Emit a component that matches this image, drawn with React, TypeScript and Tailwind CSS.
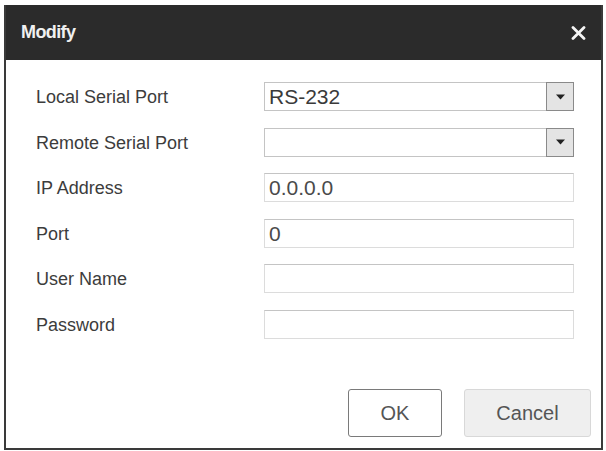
import React from 'react';

const fields = [
  { label: 'Local Serial Port', kind: 'select', value: 'RS-232' },
  { label: 'Remote Serial Port', kind: 'select', value: '' },
  { label: 'IP Address', kind: 'input', value: '0.0.0.0' },
  { label: 'Port', kind: 'input', value: '0' },
  { label: 'User Name', kind: 'input', value: '' },
  { label: 'Password', kind: 'input', value: '' },
];

const Arrow = () => (
  <svg width="9" height="6" viewBox="0 0 9 6">
    <path d="M0 0.5 H9 L4.5 5.5 Z" fill="#222" />
  </svg>
);

const Field: React.FC<{ kind: string; value: string }> = ({ kind, value }) => {
  if (kind === 'select') {
    return (
      <div className="flex h-[29px] w-[310px] items-stretch border border-[#c4c4c4] bg-white">
        <span className="flex-1 pl-[4px] text-[21px] leading-[28px] text-[#3a3a3a]">{value}</span>
        <span className="-m-px flex w-[28px] items-center justify-center border border-[#8a8a8a] bg-[#e4e4e4]">
          <Arrow />
        </span>
      </div>
    );
  }
  return (
    <div className="h-[29px] w-[310px] border border-[#dcdcdc] border-t-[#c4c4c4] bg-white pl-[4px] text-[21px] leading-[28px] text-[#4a4a4a]">
      {value}
    </div>
  );
};

export default function App() {
  return (
    <div className="min-h-[451px] w-[606px] bg-white pl-[4px] pt-[5px] font-['Liberation_Sans',Arial,sans-serif]">
      <div className="flex h-[445px] w-[599px] flex-col border-x-2 border-b-2 border-[#3a3a3a] bg-white">
        <div className="flex h-[55px] items-center justify-between bg-[#2b2b2b] pl-[15px] pr-[15px]">
          <span className="text-[18px] font-bold tracking-[-0.6px] text-[#f0f0f0]">Modify</span>
          <svg width="15" height="14" viewBox="0 0 15 14">
            <path d="M2 1.5 L13 12.5 M13 1.5 L2 12.5" stroke="#f5f5f5" strokeWidth="2.8" strokeLinecap="round" />
          </svg>
        </div>
        <div className="mt-[22px] flex flex-col pl-[30px]">
          {fields.map((f) => (
            <div key={f.label} className="flex h-[45.5px] items-start">
              <span className="w-[228px] text-[18px] leading-[30px] text-[#3c3c3c]">{f.label}</span>
              <Field kind={f.kind} value={f.value} />
            </div>
          ))}
        </div>
        <div className="mt-auto mb-[11px] flex justify-end gap-[22px] pr-[10px]">
          <button className="h-[48px] w-[94px] rounded-[3px] border border-[#7a7a7a] bg-white text-[20px] text-[#555]">
            OK
          </button>
          <button className="h-[48px] w-[127px] rounded-[3px] border border-[#d8d8d8] bg-[#efefef] text-[20px] text-[#555]">
            Cancel
          </button>
        </div>
      </div>
    </div>
  );
}
